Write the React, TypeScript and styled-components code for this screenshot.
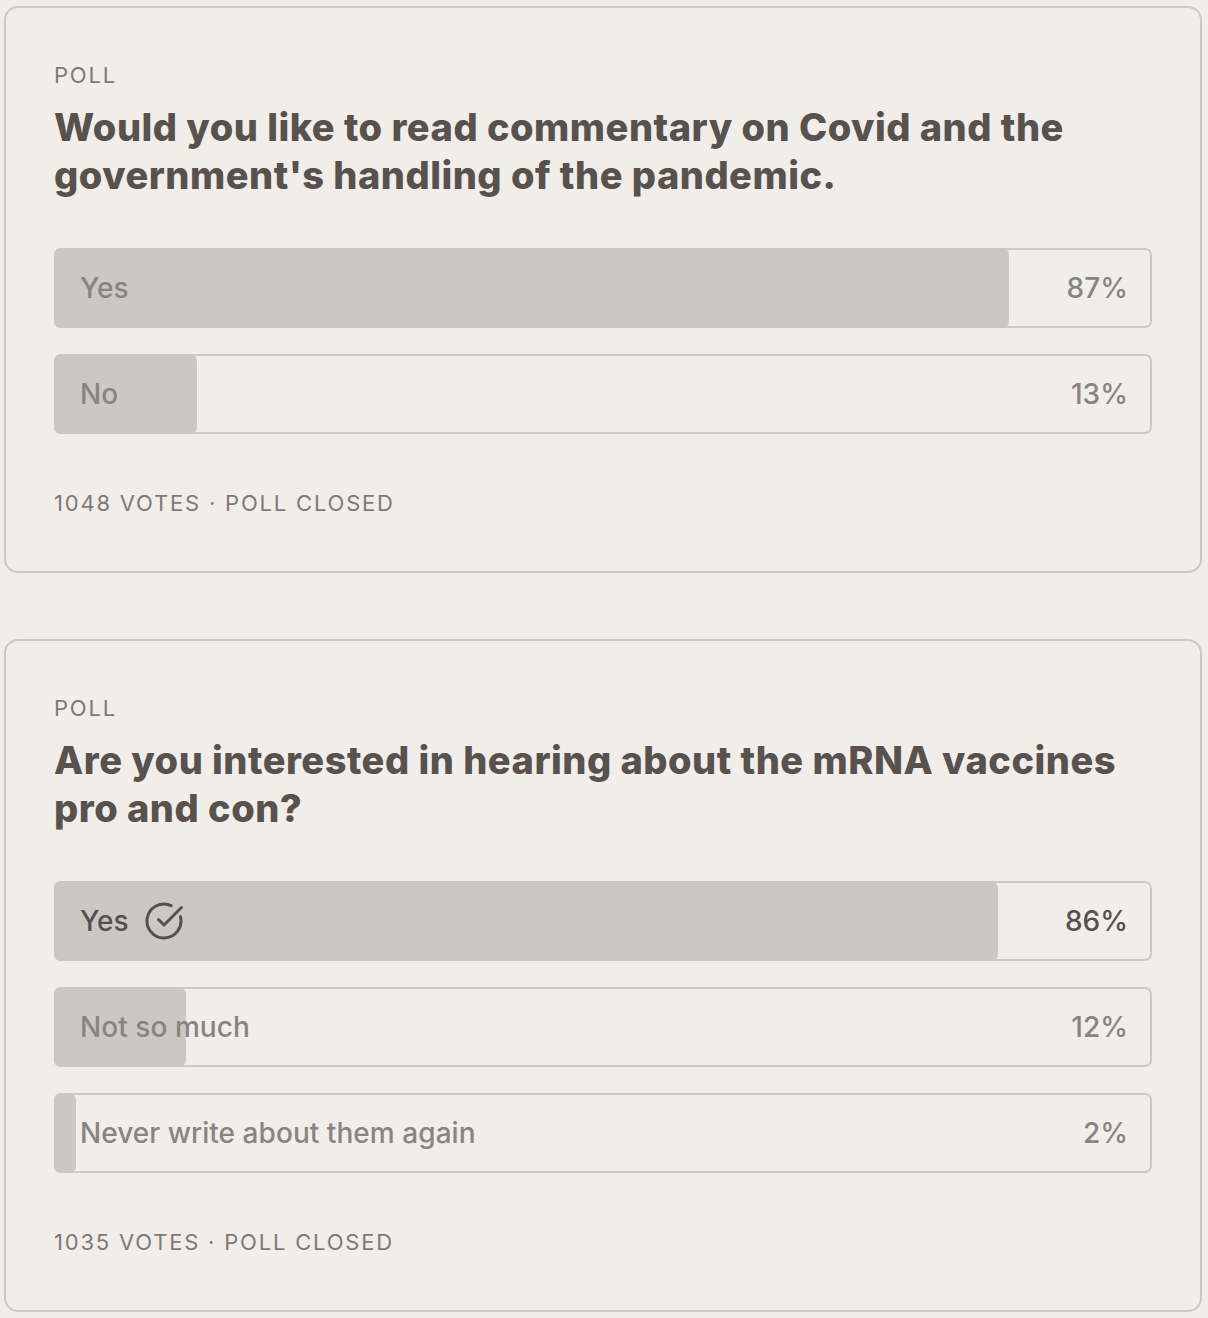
import styled, { createGlobalStyle } from 'styled-components';

type Option = {
  label: string;
  pct: number;
  chosen?: boolean;
};

type PollData = {
  question: string;
  options: Option[];
  votes: number;
};

const polls: PollData[] = [
  {
    question: "Would you like to read commentary on Covid and the government's handling of the pandemic.",
    options: [
      { label: 'Yes', pct: 87 },
      { label: 'No', pct: 13 },
    ],
    votes: 1048,
  },
  {
    question: 'Are you interested in hearing about the mRNA vaccines pro and con?',
    options: [
      { label: 'Yes', pct: 86, chosen: true },
      { label: 'Not so much', pct: 12 },
      { label: 'Never write about them again', pct: 2 },
    ],
    votes: 1035,
  },
];

const CheckIcon = () => (
  <svg width="40" height="40" viewBox="0 0 40 40" fill="none">
    <path
      d="M36.4 15.6 A17 17 0 1 1 27.2 4.6"
      stroke="#55504c"
      strokeWidth="3"
      strokeLinecap="round"
    />
    <path
      d="M14.5 18.5 L20 24 L37.5 6.5"
      stroke="#55504c"
      strokeWidth="3"
      strokeLinecap="round"
      strokeLinejoin="round"
    />
  </svg>
);

const Poll = ({ data }: { data: PollData }) => (
  <Card>
    <Eyebrow>POLL</Eyebrow>
    <Question>{data.question}</Question>
    <Options>
      {data.options.map((o) => (
        <Bar key={o.label}>
          <Fill style={{ width: `calc((100% + 4px) * ${o.pct / 100})` }} />
          <Label $chosen={o.chosen}>
            {o.label}
            {o.chosen && <CheckIcon />}
          </Label>
          <Percent $chosen={o.chosen}>{o.pct}%</Percent>
        </Bar>
      ))}
    </Options>
    <Footer>{data.votes} VOTES · POLL CLOSED</Footer>
  </Card>
);

const App = () => (
  <>
    <GlobalStyle />
    <Page>
      {polls.map((p) => (
        <Poll key={p.votes} data={p} />
      ))}
    </Page>
  </>
);

const GlobalStyle = createGlobalStyle`
  body {
    margin: 0;
    background: #f1ede9;
    font-family: Inter, "Noto Sans", sans-serif;
  }
`;

const Page = styled.div`
  display: flex;
  flex-direction: column;
  gap: 66px;
  padding: 6px 6px 8px 4px;
`;

const Card = styled.div`
  border: 2px solid #cdc9c4;
  border-radius: 14px;
  padding: 48px 48px 49px;
  background: #f1ede9;
`;

const Eyebrow = styled.div`
  font-size: 22px;
  line-height: 38px;
  letter-spacing: 1.8px;
  color: #7b7b7b;
`;

const Question = styled.h2`
  margin: 9px 0 0;
  font-size: 38px;
  line-height: 48px;
  font-weight: 800;
  letter-spacing: 0.5px;
  color: #57524e;
`;

const Options = styled.div`
  display: flex;
  flex-direction: column;
  gap: 26px;
  margin-top: 49px;
`;

const Bar = styled.div`
  position: relative;
  height: 76px;
  border: 2px solid #cdc9c4;
  border-radius: 7px;
  display: flex;
  align-items: center;
  justify-content: space-between;
  padding: 0 22px 0 24px;
`;

const Fill = styled.div`
  position: absolute;
  top: -2px;
  bottom: -2px;
  left: -2px;
  background: #cbc7c3;
  border-radius: 7px;
`;

const Label = styled.span<{ $chosen?: boolean }>`
  position: relative;
  display: flex;
  align-items: center;
  gap: 15px;
  font-size: 28px;
  font-weight: 500;
  letter-spacing: 0.05px;
  color: ${({ $chosen }) => ($chosen ? '#55504c' : '#878582')};
`;

const Percent = styled.span<{ $chosen?: boolean }>`
  position: relative;
  font-size: 28px;
  font-weight: 500;
  color: ${({ $chosen }) => ($chosen ? '#55504c' : '#878582')};
`;

const Footer = styled.div`
  margin-top: 50px;
  font-size: 22px;
  line-height: 38px;
  letter-spacing: 1.8px;
  color: #7b7b7b;
`;

export default App;
